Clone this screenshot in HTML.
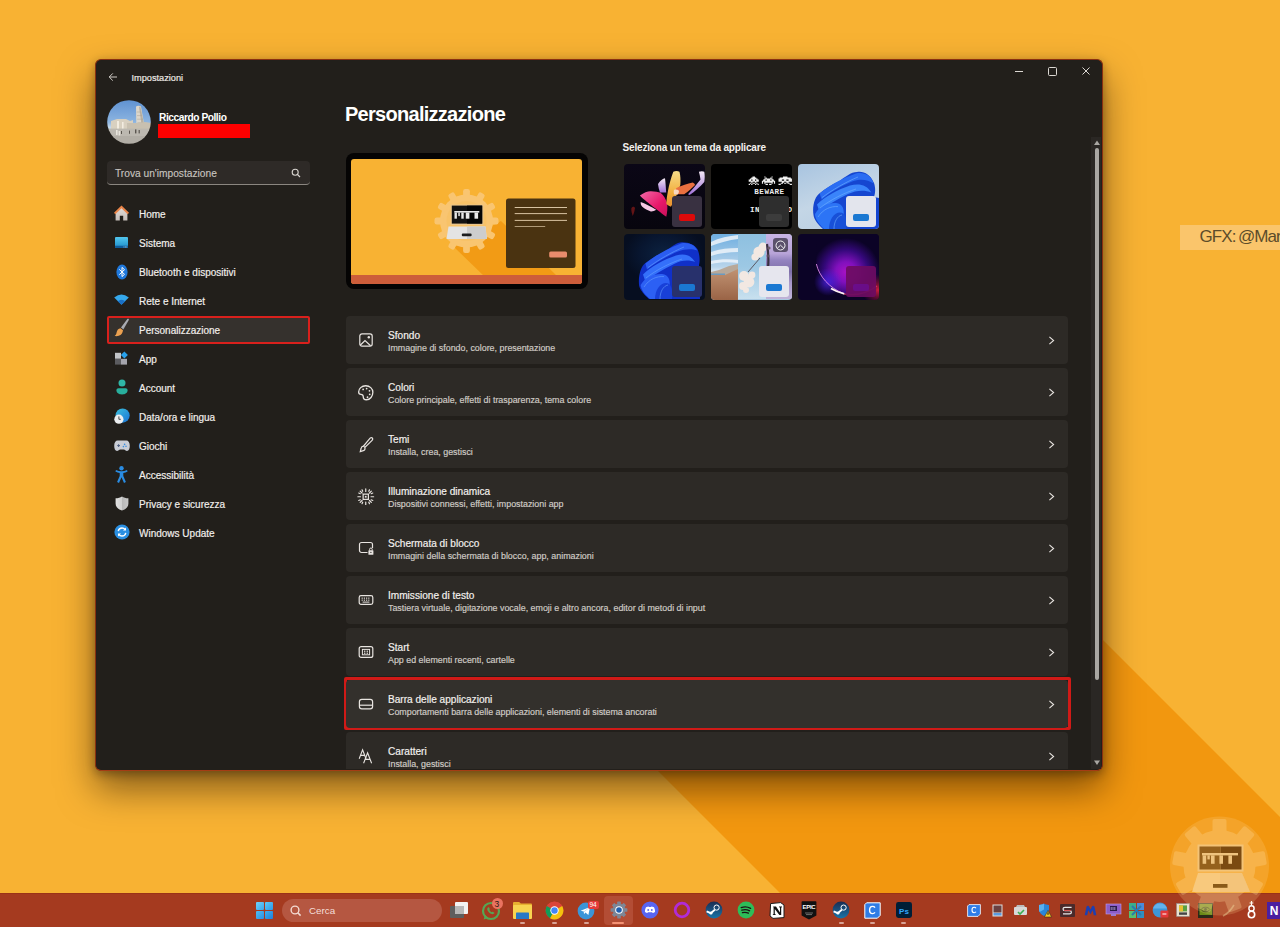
<!DOCTYPE html>
<html><head><meta charset="utf-8">
<style>
*{margin:0;padding:0;box-sizing:border-box}
html,body{width:1280px;height:927px;overflow:hidden}
body{position:relative;font-family:"Liberation Sans",sans-serif;background:#F8B233;color:#fff}
.abs{position:absolute}
#bg{position:absolute;left:0;top:0;width:1280px;height:927px;overflow:hidden}
#win{position:absolute;left:95px;top:58.5px;width:1007.5px;height:712.5px;background:#221F1B;border:1px solid #8a3010;border-bottom-color:#a43c14;border-radius:6px;box-shadow:0 18px 36px rgba(20,8,0,.5),0 3px 10px rgba(20,8,0,.32);overflow:hidden}
.t{position:absolute;white-space:nowrap;line-height:1}
.nav,.ct,.cs{-webkit-text-stroke:.18px currentColor}
.nav{position:absolute;left:139px;font-size:10px;color:#f2efec}
.card{position:absolute;left:346px;width:722px;height:48px;background:#2D2A26;border-radius:4px}
.ct{position:absolute;left:42px;top:15px;font-size:10.1px;color:#f4f1ee;white-space:nowrap;line-height:1}
.cs{position:absolute;left:42px;top:28px;font-size:8.9px;color:#cfcac5;white-space:nowrap;line-height:1}
.chev{position:absolute;left:701.5px;top:19.5px;width:8px;height:9px}
.tile{width:81px;height:65px;border-radius:4px;overflow:hidden}
.tile>svg{filter:blur(.35px)}
.mw{position:absolute;left:48px;top:31.5px;width:30px;height:31px;border-radius:3px}
.pill{position:absolute;left:55px;top:50px;width:16px;height:6.5px;border-radius:2px}
.dot{position:absolute;top:922px;width:5px;height:2px;background:#D9A396;border-radius:1px}
#taskbar{position:absolute;left:0;top:893px;width:1280px;height:34px;background:#A53A1F;border-top:1px solid #9a3218}
</style></head><body>
<div id="bg">
<svg width="1280" height="927" style="position:absolute;left:0;top:0">
<polygon points="500,613 703,240 1390,927 814,927" fill="#F2970F"/>
</svg>
</div>

<div id="win"></div>
<!-- titlebar -->
<svg class="abs" style="left:107px;top:71px" width="12" height="12" viewBox="0 0 12 12"><path d="M10 6H2.2M5.8 2.4L2.2 6l3.6 3.6" stroke="#cfcbc6" stroke-width="1" fill="none"/></svg>
<div class="t" style="left:131.5px;top:73.5px;font-size:9.2px;color:#ebe7e3;-webkit-text-stroke:.2px #ebe7e3">Impostazioni</div>
<!-- window controls -->
<div class="abs" style="left:1015px;top:70.5px;width:8px;height:1px;background:#dcd8d3"></div>
<div class="abs" style="left:1048px;top:67px;width:8.5px;height:8.5px;border:1px solid #dcd8d3;border-radius:1.5px"></div>
<svg class="abs" style="left:1081.5px;top:67px" width="8" height="8" viewBox="0 0 8 8"><path d="M.5 .5L7.5 7.5M7.5 .5L.5 7.5" stroke="#dcd8d3" stroke-width="1"/></svg>
<!-- profile -->
<svg class="abs" style="left:107px;top:100px" width="44" height="44" viewBox="0 0 44 44"><defs><clipPath id="avc"><circle cx="22" cy="22" r="21.8"/></clipPath><linearGradient id="sky" x1="0" y1="0" x2="0" y2="1"><stop offset="0" stop-color="#5f92d2"/><stop offset=".5" stop-color="#8cb4e0"/><stop offset=".62" stop-color="#c4d8ea"/></linearGradient></defs>
<filter id="avb" x="-10%" y="-10%" width="120%" height="120%"><feGaussianBlur stdDeviation=".5"/></filter><g clip-path="url(#avc)"><g filter="url(#avb)">
<rect width="44" height="44" fill="url(#sky)"/>
<path d="M29 6.4c1.6-.8 3.6-.8 5 0l3.8 21.6h-8.4z" fill="#dcd6ca"/><path d="M33.4 6.6l4.4 21.4h-2.8L32 6.8z" fill="#b8b0a2"/>
<g stroke="#a8a092" stroke-width=".5"><path d="M29.8 12h4.6M30 15.6h5.2M30.2 19.2h5.8M30.4 22.8h6.4"/></g>
<path d="M4 21l6-2h9l4 2 3-1v9H4z" fill="#d8d0c0"/>
<path d="M10 21h2v8h-2zM15 22h1.6v7H15z" fill="#f2ece0"/>
<path d="M20 23h10l8-1 6 1v6H20z" fill="#c8c0b0"/>
<rect x="0" y="28.6" width="44" height="16" fill="#bcb8b0"/>
<rect x="0" y="36" width="44" height="8" fill="#b2aea6"/>
<g fill="#5a5650"><rect x="28" y="29.4" width="1.4" height="4"/><rect x="31.6" y="30" width="1.2" height="3.4"/><rect x="14" y="31" width="1" height="3"/><rect x="22" y="30.6" width="1" height="3.2"/></g>
<g fill="#e8e4dc"><rect x="9" y="30" width="1.6" height="5"/><rect x="11.6" y="31" width="1.6" height="4.4"/></g>
</g></g></svg>
<div class="t" style="left:159px;top:113px;font-size:10.2px;font-weight:bold;color:#fff;letter-spacing:-.45px">Riccardo Pollio</div>
<div class="abs" style="left:158px;top:124px;width:92px;height:14px;background:#FE0000"></div>
<!-- search -->
<div class="abs" style="left:107px;top:161px;width:203px;height:24px;background:#2E2A27;border-radius:4px;border-bottom:1px solid #8b8680"></div>
<div class="t" style="left:115px;top:168.5px;font-size:10.2px;color:#c9c5c0;-webkit-text-stroke:.12px #c9c5c0">Trova un'impostazione</div>
<svg class="abs" style="left:291px;top:168px" width="10" height="10" viewBox="0 0 10 10"><circle cx="4.2" cy="4.2" r="3" stroke="#d8d4cf" stroke-width="1.1" fill="none"/><path d="M6.4 6.4L9 9" stroke="#d8d4cf" stroke-width="1.2"/></svg>
<!-- nav -->
<div class="abs" style="left:107px;top:316px;width:203px;height:28px;background:#35312D;border:2px solid #D9201C;border-radius:2px"></div>
<div class="t nav" style="top:210px">Home</div>
<div class="t nav" style="top:239px">Sistema</div>
<div class="t nav" style="top:268px">Bluetooth e dispositivi</div>
<div class="t nav" style="top:297px">Rete e Internet</div>
<div class="t nav" style="top:326px">Personalizzazione</div>
<div class="t nav" style="top:355px">App</div>
<div class="t nav" style="top:384px">Account</div>
<div class="t nav" style="top:413px">Data/ora e lingua</div>
<div class="t nav" style="top:442px">Giochi</div>
<div class="t nav" style="top:471px">Accessibilità</div>
<div class="t nav" style="top:500px">Privacy e sicurezza</div>
<div class="t nav" style="top:529px">Windows Update</div>
<!-- nav icons -->
<svg class="abs" style="left:113.8px;top:205.4px" width="15" height="16" viewBox="0 0 15 16"><defs><linearGradient id="hb" x1="0" y1="0" x2="0" y2="1"><stop offset="0" stop-color="#e2dcd8"/><stop offset="1" stop-color="#c4bcb8"/></linearGradient></defs><path d="M1.6 7.6V15.4h4.2v-4.6h3.4v4.6h4.2V7.6L7.5 2.4z" fill="url(#hb)"/><path d="M0 7.8L7.5 .6 15 7.8l-1.3 1.4L7.5 3.2 1.3 9.2z" fill="#ea8448"/></svg>
<svg class="abs" style="left:115px;top:236.6px" width="13" height="11.4" viewBox="0 0 13 11.4"><defs><linearGradient id="gs" x1="0" y1="0" x2="0" y2="1"><stop offset="0" stop-color="#52c6ee"/><stop offset=".7" stop-color="#2c9ed4"/><stop offset="1" stop-color="#1a78b8"/></linearGradient></defs><rect x="0" y="0" width="13" height="11.2" rx="1" fill="url(#gs)"/><rect x="0" y="8.8" width="13" height="2.4" fill="#0f5c9a"/><g fill="#cfe8f8"><rect x="8.6" y="9.6" width=".8" height=".8"/><rect x="10" y="9.6" width=".8" height=".8"/><rect x="11.4" y="9.6" width=".8" height=".8"/></g></svg>
<svg class="abs" style="left:115.5px;top:263.5px" width="12" height="16" viewBox="0 0 12 16"><ellipse cx="6" cy="8" rx="5.6" ry="7.6" fill="#1f78dc"/><path d="M3.3 5.4L8.5 10.3 6 12.6V3.4L8.5 5.7 3.3 10.6" stroke="#fff" stroke-width="1" fill="none" stroke-linejoin="round"/></svg>
<svg class="abs" style="left:114px;top:294px" width="15" height="11" viewBox="0 0 15 11"><path d="M.2 3.6Q7.5-2.4 14.8 3.6L7.5 10.8z" fill="#35a8ec"/><path d="M3.6 7.2Q7.5 4.2 11.4 7.2L7.5 10.8z" fill="#1a6fc4"/></svg>
<svg class="abs" style="left:114px;top:317.5px" width="16" height="19" viewBox="0 0 16 19"><defs><linearGradient id="brh" x1="0" y1="0" x2="1" y2="1"><stop offset="0" stop-color="#c8cad0"/><stop offset="1" stop-color="#8a8c94"/></linearGradient></defs><path d="M13.6 .8c.8-.4 1.6.3 1.2 1.1L9.4 11.4 7 9.6z" fill="url(#brh)"/><path d="M6.4 10.2l2.6 2c-.2 2.6-1.6 4.8-4.2 5.6-1.4.4-3 .4-4.2.2 1.2-.8 1.8-2 2-3.4.4-2.4 1.8-4.2 3.8-4.4z" fill="#eba050"/></svg>
<svg class="abs" style="left:115px;top:351px" width="14" height="14" viewBox="0 0 14 14"><rect x="0" y="1.8" width="6" height="6" fill="#c2c4c8"/><rect x="0" y="7.8" width="6" height="5.8" fill="#5c5c60"/><rect x="6" y="7.8" width="6" height="5.8" fill="#a4a4ac"/><path d="M9.4 .6l3.5 3.5-3.5 3.5-3.5-3.5z" fill="#28a0ea"/></svg>
<svg class="abs" style="left:115.5px;top:379px" width="12" height="16" viewBox="0 0 12 16"><circle cx="6" cy="3.9" r="3.5" fill="#2fb6a6"/><path d="M.4 11.2c0-1.2.9-2 2-2h7.2c1.1 0 2 .8 2 2 0 2.4-2.4 4.2-5.6 4.2S.4 13.6.4 11.2z" fill="#28ae9c"/></svg>
<svg class="abs" style="left:114px;top:408.4px" width="16" height="16" viewBox="0 0 16 16"><defs><linearGradient id="glb" x1="0" y1="0" x2="1" y2="1"><stop offset="0" stop-color="#3cc0dc"/><stop offset="1" stop-color="#1a72d6"/></linearGradient></defs><circle cx="8.6" cy="7.6" r="7.1" fill="url(#glb)"/><circle cx="4.9" cy="11.2" r="4.6" fill="#eceef0"/><path d="M4.9 8.4v2.9h1.9" stroke="#3a3a3a" stroke-width=".9" fill="none"/></svg>
<svg class="abs" style="left:113.5px;top:440px" width="16" height="12" viewBox="0 0 16 12"><path d="M3.6.6h8.8c2 0 3.4 2 3.4 5.2 0 3-1 5.2-2.8 5.2-1.4 0-2-1.6-3.2-1.6H6.2C5 9.4 4.4 11 3 11 1.2 11 .2 8.8.2 5.8.2 2.6 1.6.6 3.6.6z" fill="#c9cdd6"/><path d="M3.2 5.6h2.8M4.6 4.2v2.8" stroke="#4a5c80" stroke-width="1"/><circle cx="10.6" cy="4.4" r=".8" fill="#3a8ee0"/><circle cx="12" cy="6.2" r=".8" fill="#3a8ee0"/><circle cx="9.4" cy="6.6" r=".8" fill="#3a8ee0"/></svg>
<svg class="abs" style="left:115px;top:465.6px" width="13" height="17" viewBox="0 0 13 17"><circle cx="6.5" cy="2.3" r="2.2" fill="#2a8ce2"/><path d="M.4 5.6l.6-1.6c1.8.8 3.6 1.2 5.5 1.2s3.7-.4 5.5-1.2l.6 1.6c-1.4.7-2.8 1.2-4.3 1.5v2.8l2.6 6.2-1.9.8-2.5-5.6-2.5 5.6-1.9-.8 2.6-6.2V7.1C3.2 6.8 1.8 6.3.4 5.6z" fill="#2a8ce2"/></svg>
<svg class="abs" style="left:114.5px;top:495.5px" width="14" height="15" viewBox="0 0 14 15"><defs><linearGradient id="gsh" x1="0" y1="0" x2="1" y2="0"><stop offset="0" stop-color="#e2e2e2"/><stop offset=".5" stop-color="#d0d0d0"/><stop offset=".5" stop-color="#b8b8b8"/><stop offset="1" stop-color="#c8c8c8"/></linearGradient></defs><path d="M7 .4c1.8 1.2 3.8 1.8 6.4 1.8v5.2c0 3.2-2.2 5.8-6.4 7.2C2.8 13.2.6 10.6.6 7.4V2.2C3.2 2.2 5.2 1.6 7 .4z" fill="url(#gsh)"/></svg>
<svg class="abs" style="left:113.5px;top:524px" width="16" height="16" viewBox="0 0 16 16"><circle cx="8" cy="8" r="7.6" fill="#2a8fe2"/><path d="M4.2 7.2C4.6 5.2 6.2 4 8 4c1.3 0 2.4.6 3.1 1.5M11.8 8.8c-.4 2-2 3.2-3.8 3.2-1.3 0-2.4-.6-3.1-1.5" stroke="#fff" stroke-width="1.3" fill="none"/><path d="M12 3.4v3h-3z" fill="#fff"/><path d="M4 12.6v-3h3z" fill="#fff"/></svg>
<!-- heading -->
<div class="t" style="left:345px;top:104px;font-size:20px;font-weight:bold;color:#fff;letter-spacing:-.72px">Personalizzazione</div>


<!-- preview -->
<div class="abs" style="left:346px;top:153px;width:242px;height:136px;background:#050404;border-radius:8px"></div>
<div class="abs" style="left:351px;top:159px;width:231px;height:125px;border-radius:3px;overflow:hidden;background:#F8B233">
 <svg width="231" height="125" viewBox="0 0 231 125" style="position:absolute;left:0;top:0">
  <polygon points="103,88 150,62 207,118 134,118" fill="#F29B15"/>
  <g transform="translate(115.5,62)" fill="#F9C571">
   <circle r="26.5"/>
   <rect id="teeth" x="-3.4" y="-32" width="6.8" height="9" rx="2.2"/>
   <use href="#teeth" transform="rotate(30)"/><use href="#teeth" transform="rotate(60)"/><use href="#teeth" transform="rotate(90)"/><use href="#teeth" transform="rotate(120)"/><use href="#teeth" transform="rotate(150)"/><use href="#teeth" transform="rotate(180)"/><use href="#teeth" transform="rotate(210)"/><use href="#teeth" transform="rotate(240)"/><use href="#teeth" transform="rotate(270)"/><use href="#teeth" transform="rotate(300)"/><use href="#teeth" transform="rotate(330)"/>
  </g>
  <circle cx="115.5" cy="62" r="20" fill="#F8BF5E" opacity=".5"/>
  <rect x="99.5" y="45.5" width="33" height="20.5" rx="1" fill="#EAC58A"/>
  <rect x="100.8" y="46.6" width="30.4" height="18" fill="#121212"/>
  <rect x="116" y="46.6" width="15.2" height="18" fill="#050505"/>
  <g fill="#E8E8E8"><rect x="103.3" y="52" width="25" height="1.6"/><rect x="103.5" y="53.5" width="2.4" height="6.2"/><rect x="107.3" y="53.5" width="1.5" height="3.6"/><rect x="110.3" y="53.5" width="2.4" height="6.2"/><rect x="114.8" y="53.5" width="3.6" height="6.2"/><rect x="123.5" y="53.5" width="3.6" height="6.2"/></g>
  <polygon points="97.5,67.5 134.5,67.5 135.8,80 95.5,80" fill="#E4E4E4"/>
  <polygon points="116,67.5 134.5,67.5 135.8,80 116,80" fill="#CDCDCD"/>
  <rect x="110.8" y="74.6" width="9.8" height="2.6" rx="1" fill="#1e1e1e"/>
  <rect x="155" y="39.5" width="69.5" height="69.5" rx="2.5" fill="#4A3311"/>
  <g stroke="#D8C3A2" stroke-width="1"><path d="M163.7 48.5h52.3M163.7 54.6h52.3M163.7 61.4h52.3"/><path d="M163.7 67.5h30.5" stroke="#b09a78"/></g>
  <rect x="198.2" y="92.6" width="17.8" height="6" rx="1.5" fill="#E98C6C"/>
  <rect x="0" y="116" width="231" height="9" fill="#CD5D3A"/>
 </svg>
</div>
<div class="t" style="left:622.5px;top:143px;font-size:10px;font-weight:bold;color:#f4f1ee;letter-spacing:-.17px">Seleziona un tema da applicare</div>
<!-- tiles -->
<div class="abs tile" style="left:624px;top:164px;background:linear-gradient(180deg,#0b0716 0%,#07050e 100%)">
 <svg class="abs" style="left:0;top:0" width="81" height="65" viewBox="0 0 81 65">
  <defs>
   <linearGradient id="pk" x1="0" y1="0" x2="1" y2="1"><stop offset="0" stop-color="#f26aa8"/><stop offset=".6" stop-color="#e8186a"/><stop offset="1" stop-color="#c8105a"/></linearGradient>
   <linearGradient id="yl" x1="0" y1="0" x2="0" y2="1"><stop offset="0" stop-color="#f6dc88"/><stop offset=".6" stop-color="#f2b040"/><stop offset="1" stop-color="#e89030"/></linearGradient>
   <linearGradient id="wl" x1="0" y1="0" x2="0" y2="1"><stop offset="0" stop-color="#f4eaf4"/><stop offset="1" stop-color="#a070d8"/></linearGradient>
  </defs>
  <path d="M7.4 44c1.5-2 3-1.5 3.6 0-.4 3-1.4 6-2.2 8-.8-2.2-1.8-5-1.4-8z" fill="#7a1818" opacity=".8"/>
  <path d="M34 20c2-3.5 5-5.5 7-5.8.6 4 .8 9.4 1.2 14.4h-6.2C35 26 34.4 23 34 20z" fill="url(#wl)"/>
  <path d="M15.9 31.4C20 28.5 24 27 27 27.2c4 .2 7.5.6 9.5 1.6 3 2.2 5.5 6.5 6.6 10.8.6 4 .2 9-.8 13.2-3-2-6-4.5-9.3-7C28 42 23 38 21.4 36.5c-2.2-1.8-4.2-3.3-5.5-5.1z" fill="url(#pk)"/>
  <path d="M16.7 38c5 2 10.5 4.5 15.5 7.8-1.8 1.2-3.8 1.8-5.4 1.6-3-1-6.2-2.7-8.5-4.7-1.2-1.2-1.8-2.7-1.6-4.7z" fill="#f4c8e4"/>
  <path d="M49.3 7.8c2-1.2 4.4-1.2 6.2 0 1 4 1.2 8.6.8 13.1-2.2 7.6-5.6 14.6-9.3 21.8-2.4-.8-4.2-1.8-4.7-3.1.2-4.2.8-8.4 1.6-12.4 1.2-6.6 3-13 5.4-19.4z" fill="url(#yl)"/>
  <path d="M52.4 24.1c5.4-2.4 11-4.4 16.3-5.5 1.2.4 2 1.2 2.3 2.4-3.4 3.4-7 6.6-10.8 9.3h-8.6c-.4-2.2-.2-4.2.8-6.2z" fill="#ea7040"/>
  <path d="M50 26c1.8-.8 3.6-.4 5 .8 0 1.4-.4 2.6-1.2 3.6h-3.6c-.6-1.4-.6-3 -.2-4.4z" fill="#f8d8c0"/>
  <path d="M74.9 7.8c2-.8 4-.8 5.4 0 .6 3.4.6 6.8 0 10.1-4.6 5-9.3 9.4-14.7 13.1l-1.6-.7c4.4-4.8 8.6-9.8 12.5-14.8-.4-2.6-.9-5.2-1.6-7.7z" fill="url(#wl)"/>
 </svg>
 <div class="mw" style="background:#393141"></div><div class="pill" style="background:#DD0A0A"></div>
</div>
<div class="abs tile" style="left:711px;top:164px;background:#000">
 <svg class="abs" style="left:0;top:0" width="81" height="65" viewBox="0 0 81 65">
  <g fill="#f0f0f0">
   <g transform="translate(37.7 12.4) scale(1.26 1.06)"><path d="M3 0h2v1H3zM2 1h4v1H2zM1 2h6v1H1zM0 3h2v1H0zM3 3h2v1H3zM6 3h2v1H6zM0 4h8v1H0zM2 5h1v1H2zM5 5h1v1H5zM1 6h1v1H1zM3 6h2v1H3zM6 6h1v1H6zM0 7h1v1H0zM2 7h1v1H2zM5 7h1v1H5zM7 7h1v1H7z"/></g>
   <g transform="translate(50.9 12.4) scale(1.2 1.06)"><path d="M2 0h1v1H2zM8 0h1v1H8zM3 1h1v1H3zM7 1h1v1H7zM2 2h7v1H2zM1 3h2v1H1zM4 3h3v1H4zM8 3h2v1H8zM0 4h11v1H0zM0 5h1v1H0zM2 5h7v1H2zM10 5h1v1H10zM0 6h1v1H0zM2 6h1v1H2zM8 6h1v1H8zM10 6h1v1H10zM3 7h2v1H3zM6 7h2v1H6z"/></g>
   <g transform="translate(67.5 12.4) scale(1.12 1.06)"><path d="M4 0h4v1H4zM1 1h10v1H1zM0 2h12v1H0zM0 3h3v1H0zM5 3h2v1H5zM9 3h3v1H9zM0 4h12v1H0zM3 5h2v1H3zM7 5h2v1H7zM2 6h2v1H2zM5 6h2v1H5zM8 6h2v1H8zM0 7h2v1H0zM10 7h2v1H10z"/></g>
  </g>
 </svg>
 <div class="t" style="left:43.3px;top:25.2px;font-family:'Liberation Mono',monospace;font-size:7.6px;font-weight:bold;color:#ececec;letter-spacing:.5px">BEWARE</div>
 <div class="t" style="left:39px;top:43.2px;font-family:'Liberation Mono',monospace;font-size:7.6px;font-weight:bold;color:#ececec;letter-spacing:.5px">IN</div>
 <div class="t" style="left:76.5px;top:43.2px;font-family:'Liberation Mono',monospace;font-size:7.6px;font-weight:bold;color:#ececec">D</div>
 <div class="mw" style="background:#2e2e2e"></div><div class="pill" style="background:#3c3c3c"></div>
</div>
<div class="abs tile" style="left:798px;top:164px;background:linear-gradient(160deg,#a8c4e0 0%,#c4d6e6 50%,#b8cde0 100%)">
 <svg class="abs" style="left:0;top:0" width="81" height="65" viewBox="0 0 81 65">
  <path d="M15.5 51C14 42 17 32 22 29 28 24 35 20 40 18 47 13 53 8 59 8 66 7 72 10 76 19 78 25 77 30 76 33L81 34V65H25C20 60 16 56 15.5 51z" fill="#1546d0"/>
  <path d="M21.7 29.6C30 22 44 14 58 9.4 66 7.8 73 11 75.6 19.6 70 15.6 62 14.6 54 17.6 44 21.6 32 28.6 23.6 35.6z" fill="#2a6cf2"/>
  <path d="M19 40.6C26 33 40 25.6 52 21.6 61 19 69 21 73.4 28.6 67 25.6 58 26 50 30 40 35 28 41.6 21.4 47.6z" fill="#3a84fa"/>
  <path d="M17 50C21 42 30 38.6 38 39 45 39.6 47 46 45 54 43 60 40 65 37 65H26C21 60 17 55 17 50z" fill="#2c74f6"/>
  <path d="M31 65C31 56 36 48.6 42 48.6 47 48.6 49 54 48 65z" fill="#1850d8"/>
  <g stroke="#74b4ff" stroke-width=".7" fill="none" opacity=".8"><path d="M24 33.6C34 26 48 18 60 13"/><path d="M22 44C32 36 46 29 58 25"/><path d="M20 53C25 45 33 42 40 42.6"/><path d="M36 65C36 58 39 52 44 51"/></g>
 </svg>
 <div class="mw" style="background:#E3E5ED"></div><div class="pill" style="background:#1A78D2"></div>
</div>
<div class="abs tile" style="left:624px;top:234px;height:65.6px;background:radial-gradient(ellipse 40px 30px at 40px 20px,#0c2240 0%,#081630 60%,#060e20 100%)">
 <svg class="abs" style="left:0;top:0" width="81" height="65" viewBox="0 0 81 65">
  <path d="M15.1 51.6C14 42 17 32 21.4 29.1 28 24 35 20 40 18 47 13 53 8.2 57.8 8.2 65 8 71 11 73.4 15.1 76 21 76 27 75 31 L76 65H25C20 61 16 56 15.1 51.6z" fill="#1030c8"/>
  <path d="M21.4 29.6C30 22 44 14 57 9.4 65 8 71 11 73.4 16.6 68 14.6 61 14.6 54 17.6 44 21.6 32 28.6 23 35.6z" fill="#2a5cf0"/>
  <path d="M19 40.6C26 33 40 25.6 52 21.6 60 19 67 21 71 28 65 25.6 57 26 50 30 40 35 28 41.6 21.4 47.6z" fill="#3470fa"/>
  <path d="M16.6 51C21 43 30 39.6 38 40 45 40.6 47 47 45 55 43 61 40 65 37 65H26C21 61 17 56 16.6 51z" fill="#2c60f4"/>
  <path d="M31 65C31 56 36 49 42 49 47 49 49 55 48 65z" fill="#1840d8"/>
  <g stroke="#6aa4ff" stroke-width=".7" fill="none" opacity=".8"><path d="M24 33.6C34 26 48 18 60 13"/><path d="M22 44C32 36 46 29 58 25"/><path d="M20 53C25 45 33 42 40 42.6"/><path d="M36 65C36 58 39 52 44 51"/></g>
 </svg>
 <div class="mw" style="background:#28316c"></div><div class="pill" style="background:#1A78D2"></div>
</div>
<div class="abs tile" style="left:711px;top:234px;height:65.6px;background:#a8c8e0">
 <svg class="abs" style="left:0;top:0" width="27.2" height="66" viewBox="0 0 27.2 66"><defs><linearGradient id="t5s" x1="0" y1="0" x2="0" y2="1"><stop offset="0" stop-color="#6eaee0"/><stop offset=".5" stop-color="#b8d4ea"/><stop offset=".6" stop-color="#e8f0f6"/></linearGradient><linearGradient id="t5g" x1="0" y1="0" x2="0" y2="1"><stop offset="0" stop-color="#c09272"/><stop offset="1" stop-color="#9a6446"/></linearGradient></defs>
<rect width="27.2" height="66" fill="url(#t5s)"/>
<g fill="#eef4fa" opacity=".85"><path d="M0 8c8-4 18-6 27-7v4C18 6 8 9 0 12z"/><path d="M0 18c9-3 18-4 27-4v4c-9 0-18 1-27 4z"/><path d="M0 27c9-2 18-2 27-1v3c-9-1-18-1-27 1z"/></g>
<path d="M0 38l8-2 10-4 9-2V42H0z" fill="#b8a898"/>
<rect x="0" y="39.5" width="14" height="1.6" fill="#6a9ac0"/>
<path d="M0 41l14 0 13-6V66H0z" fill="url(#t5g)"/>
</svg>
 <div class="abs" style="left:27.2px;top:0;width:28px;height:65px;background:linear-gradient(180deg,#8ec0e0 0%,#9cc8e4 50%,#c8e0ee 100%)"></div>
 <svg class="abs" style="left:27.2px;top:0" width="28" height="65" viewBox="0 0 28 65"><path d="M10 38L22 24" stroke="#4a3a40" stroke-width=".8"/><g fill="#f2e8e2"><circle cx="21" cy="18" r="5.6"/><circle cx="25" cy="13" r="4.4"/><circle cx="17" cy="23" r="3.6"/><circle cx="6" cy="42" r="5"/><circle cx="11" cy="48" r="5.4"/><circle cx="5" cy="52" r="4"/><circle cx="14" cy="41" r="3.4"/><circle cx="8" cy="56" r="3"/></g></svg>
 <div class="abs" style="left:55.2px;top:0;width:25.8px;height:65px;background:linear-gradient(180deg,#c8b4e4 0%,#b8a4d8 30%,#9484c0 40%,#7e70a8 58%,#a898c8 75%,#c0b4d8 100%)"></div>
 <svg class="abs" style="left:55.2px;top:0" width="26" height="65" viewBox="0 0 26 65"><path d="M1 10c1 6 2 14 1 24" stroke="#3a3040" stroke-width="2.2" fill="none"/><circle cx="3" cy="14" r="1.6" fill="#6a5a6a"/><circle cx="2" cy="22" r="1.4" fill="#5a4a5a"/></svg>
 <div class="abs" style="left:61.7px;top:4.3px;width:15px;height:14px;background:#5b516c;border-radius:3px"></div>
 <svg class="abs" style="left:63.7px;top:5.8px" width="11" height="11" viewBox="0 0 11 11"><circle cx="5.5" cy="5.5" r="4.5" stroke="#f4f4f4" stroke-width="1" fill="none"/><path d="M2 8.6L5.5 5.2 9 8.6" stroke="#f4f4f4" stroke-width="1" fill="none"/></svg>
 <div class="mw" style="background:#E6E6EE"></div><div class="pill" style="background:#1A78D2"></div>
</div>
<div class="abs tile" style="left:798px;top:234px;height:65.6px;background:#0b0326">
 <svg class="abs" style="left:0;top:0" width="81" height="66" viewBox="0 0 81 66">
  <defs>
   <radialGradient id="pl6" cx="48" cy="38" r="34" gradientUnits="userSpaceOnUse"><stop offset="0" stop-color="#a812c4"/><stop offset=".3" stop-color="#8010bc"/><stop offset=".65" stop-color="#34087a"/><stop offset="1" stop-color="#0b0326"/></radialGradient>
   <radialGradient id="bl6" cx="30" cy="48" r="14" gradientUnits="userSpaceOnUse"><stop offset="0" stop-color="#4a20e0" stop-opacity=".9"/><stop offset="1" stop-color="#4a20e0" stop-opacity="0"/></radialGradient>
   <radialGradient id="rd6" cx="80" cy="56" r="16" gradientUnits="userSpaceOnUse"><stop offset="0" stop-color="#e02040" stop-opacity=".9"/><stop offset="1" stop-color="#a01040" stop-opacity="0"/></radialGradient>
  </defs>
  <path d="M18.4 30C21 42 31 54 46 59.6 60 62 81 60 81 40V0H18z" fill="url(#pl6)"/>
  <circle cx="30" cy="48" r="14" fill="url(#bl6)"/>
  <rect x="60" y="36" width="21" height="30" fill="url(#rd6)"/>
  <path d="M18.4 30C21 42 31 54 46 59.6" stroke="#e890f0" stroke-width="1" fill="none" opacity=".85"/>
  <path d="M33 54.6C37 57 41.5 58.8 46.4 59.8" stroke="#fff2f6" stroke-width="1.8" fill="none"/>
  <path d="M46 60c10 2 22 0 33-8" stroke="#ff4070" stroke-width="1.4" fill="none" opacity=".6"/>
 </svg>
 <div class="mw" style="background:#6c0c62;opacity:.92"></div><div class="pill" style="background:#6a10a8;opacity:.55"></div>
</div>
<!-- cards -->
<div class="card" style="top:316px;background:#2D2A26"><svg class="abs" style="left:12px;top:16px" width="16" height="16" viewBox="0 0 16 16"><rect x="1.8" y="1.8" width="12.4" height="12.4" rx="2.2" stroke="#e8e4e0" stroke-width="1.2" fill="none"/><path d="M2.2 13.2L7 8.6l5.6 5.2" stroke="#e8e4e0" stroke-width="1.2" fill="none"/><circle cx="10.8" cy="5.2" r="1.2" fill="#e8e4e0"/></svg><div class="ct">Sfondo</div><div class="cs">Immagine di sfondo, colore, presentazione</div><svg class="chev" viewBox="0 0 8 9"><path d="M1.4 .8l4.2 3.7-4.2 3.7" stroke="#e8e4e0" stroke-width="1.1" fill="none"/></svg></div>
<div class="card" style="top:368px;background:#2D2A26"><svg class="abs" style="left:11.3px;top:15.6px" width="17.5" height="17.5" viewBox="0 0 16 16"><path d="M8 1.6C4.2 1.6 1.5 4.3 1.5 7.2c0 1.5 1 2.2 2.1 2.2 1.4 0 2.1.9 2.1 2 0 1.6 1 3 2.8 3 3.6 0 6-3.3 6-6.8C14.5 4.2 11.6 1.6 8 1.6z" stroke="#e8e4e0" stroke-width="1.2" fill="none"/><circle cx="5.6" cy="5" r=".8" fill="#e8e4e0"/><circle cx="8.8" cy="4.2" r=".8" fill="#e8e4e0"/><circle cx="11.4" cy="6.2" r=".8" fill="#e8e4e0"/><circle cx="11.6" cy="9.4" r=".8" fill="#e8e4e0"/><circle cx="9.6" cy="12" r=".8" fill="#e8e4e0"/></svg><div class="ct">Colori</div><div class="cs">Colore principale, effetti di trasparenza, tema colore</div><svg class="chev" viewBox="0 0 8 9"><path d="M1.4 .8l4.2 3.7-4.2 3.7" stroke="#e8e4e0" stroke-width="1.1" fill="none"/></svg></div>
<div class="card" style="top:420px;background:#2D2A26"><svg class="abs" style="left:11.3px;top:15.6px" width="17.5" height="17.5" viewBox="0 0 16 16"><path d="M14 1.8c-.6-.6-1.4-.4-2 .2L6 9.2l1.2 1.2 6.6-6.4c.6-.6.8-1.6.2-2.2z" stroke="#e8e4e0" stroke-width="1.1" fill="none"/><path d="M6 9.2c-1.2 0-2 .8-2.2 2L3 14.2l2.8-.8c1.2-.3 1.8-1.4 1.4-2.6" stroke="#e8e4e0" stroke-width="1.1" fill="none"/></svg><div class="ct">Temi</div><div class="cs">Installa, crea, gestisci</div><svg class="chev" viewBox="0 0 8 9"><path d="M1.4 .8l4.2 3.7-4.2 3.7" stroke="#e8e4e0" stroke-width="1.1" fill="none"/></svg></div>
<div class="card" style="top:472px;background:#2D2A26"><svg class="abs" style="left:11.3px;top:15.6px" width="17.5" height="17.5" viewBox="0 0 16 16"><rect x="5.6" y="5.6" width="4.8" height="4.8" stroke="#e8e4e0" stroke-width="1.1" fill="none"/><rect x="7.2" y="7.2" width="1.6" height="1.6" fill="#e8e4e0"/><g stroke="#e8e4e0" stroke-width="1.1" stroke-linecap="round"><path d="M8 .8v2.4M8 12.8v2.4M.8 8h2.4M12.8 8h2.4M2.9 2.9l1.7 1.7M11.4 11.4l1.7 1.7M13.1 2.9l-1.7 1.7M4.6 11.4l-1.7 1.7M4.6 1.6l.6 1.4M10.8 13l.6 1.4M1.6 11.4l1.4-.6M13 5.2l1.4-.6M11.4 1.6l-.6 1.4M5.2 13l-.6 1.4M1.6 4.6l1.4.6M13 10.8l1.4.6"/></g></svg><div class="ct">Illuminazione dinamica</div><div class="cs">Dispositivi connessi, effetti, impostazioni app</div><svg class="chev" viewBox="0 0 8 9"><path d="M1.4 .8l4.2 3.7-4.2 3.7" stroke="#e8e4e0" stroke-width="1.1" fill="none"/></svg></div>
<div class="card" style="top:524px;background:#2D2A26"><svg class="abs" style="left:12px;top:16px" width="16" height="16" viewBox="0 0 16 16"><path d="M9.5 12.5H3.5c-1.1 0-2-.9-2-2v-6c0-1.1.9-2 2-2h9c1.1 0 2 .9 2 2v3.5" stroke="#e8e4e0" stroke-width="1.2" fill="none"/><rect x="10.4" y="10.2" width="5" height="4.6" rx=".6" fill="#e8e4e0"/><path d="M11.6 10.4V9.3a1.3 1.3 0 0 1 2.6 0v1.1" stroke="#e8e4e0" stroke-width="1" fill="none"/><circle cx="12.9" cy="12.4" r=".6" fill="#2D2A26"/></svg><div class="ct">Schermata di blocco</div><div class="cs">Immagini della schermata di blocco, app, animazioni</div><svg class="chev" viewBox="0 0 8 9"><path d="M1.4 .8l4.2 3.7-4.2 3.7" stroke="#e8e4e0" stroke-width="1.1" fill="none"/></svg></div>
<div class="card" style="top:576px;background:#2D2A26"><svg class="abs" style="left:12px;top:16px" width="16" height="16" viewBox="0 0 16 16"><rect x="1.2" y="3.6" width="13.6" height="8.8" rx="1.8" stroke="#e8e4e0" stroke-width="1.2" fill="none"/><g fill="#e8e4e0"><rect x="3.6" y="5.6" width="1.2" height="1.1"/><rect x="5.8" y="5.6" width="1.2" height="1.1"/><rect x="8" y="5.6" width="1.2" height="1.1"/><rect x="10.2" y="5.6" width="1.2" height="1.1"/><rect x="3.6" y="7.6" width="1.2" height="1.1"/><rect x="5.8" y="7.6" width="1.2" height="1.1"/><rect x="8" y="7.6" width="1.2" height="1.1"/><rect x="10.2" y="7.6" width="1.2" height="1.1"/><rect x="4.6" y="9.6" width="6.8" height="1"/></g></svg><div class="ct">Immissione di testo</div><div class="cs">Tastiera virtuale, digitazione vocale, emoji e altro ancora, editor di metodi di input</div><svg class="chev" viewBox="0 0 8 9"><path d="M1.4 .8l4.2 3.7-4.2 3.7" stroke="#e8e4e0" stroke-width="1.1" fill="none"/></svg></div>
<div class="card" style="top:628px;background:#2D2A26"><svg class="abs" style="left:12px;top:16px" width="16" height="16" viewBox="0 0 16 16"><rect x="1.2" y="2.6" width="13.6" height="10.8" rx="2" stroke="#e8e4e0" stroke-width="1.2" fill="none"/><rect x="4.4" y="5.4" width="7.2" height="5.4" stroke="#e8e4e0" stroke-width="1" fill="none"/><g fill="#e8e4e0"><rect x="6" y="6.6" width="1.4" height="1.2"/><rect x="8.6" y="6.6" width="1.4" height="1.2"/><rect x="6" y="8.6" width="1.4" height="1.2"/><rect x="8.6" y="8.6" width="1.4" height="1.2"/></g></svg><div class="ct">Start</div><div class="cs">App ed elementi recenti, cartelle</div><svg class="chev" viewBox="0 0 8 9"><path d="M1.4 .8l4.2 3.7-4.2 3.7" stroke="#e8e4e0" stroke-width="1.1" fill="none"/></svg></div>
<div class="abs" style="left:344px;top:677px;width:727px;height:53px;border:3px solid #D01A17;border-radius:2px"></div>
<div class="card" style="top:680px;background:#33302C"><svg class="abs" style="left:12px;top:16px" width="16" height="16" viewBox="0 0 16 16"><rect x="1.4" y="3.4" width="13.2" height="9.4" rx="2.4" stroke="#e8e4e0" stroke-width="1.2" fill="none"/><path d="M1.6 9.2h12.8" stroke="#e8e4e0" stroke-width="1.2"/></svg><div class="ct">Barra delle applicazioni</div><div class="cs">Comportamenti barra delle applicazioni, elementi di sistema ancorati</div><svg class="chev" viewBox="0 0 8 9"><path d="M1.4 .8l4.2 3.7-4.2 3.7" stroke="#e8e4e0" stroke-width="1.1" fill="none"/></svg></div>
<div class="card" style="top:732px;background:#2D2A26;height:37px;border-radius:4px 4px 0 0;overflow:hidden"><svg class="abs" style="left:12px;top:16px" width="16" height="16" viewBox="0 0 16 16"><path d="M1.2 10.8L4.6 1.8l3.4 9M2.6 7.4h4" stroke="#e8e4e0" stroke-width="1.1" fill="none"/><path d="M5.6 15.2L9.6 4.8l4 10.4M7.2 11.4h4.8" stroke="#e8e4e0" stroke-width="1.1" fill="none"/></svg><div class="ct">Caratteri</div><div class="cs">Installa, gestisci</div><svg class="chev" viewBox="0 0 8 9"><path d="M1.4 .8l4.2 3.7-4.2 3.7" stroke="#e8e4e0" stroke-width="1.1" fill="none"/></svg></div>
<!-- scrollbar -->
<div class="abs" style="left:1091px;top:137px;width:10px;height:632px;background:#2A2724"></div>
<svg class="abs" style="left:1093px;top:139px" width="8" height="7" viewBox="0 0 8 7"><path d="M1 6L4 1.5 7 6z" fill="#a9a7a3"/></svg>
<div class="abs" style="left:1094.5px;top:147.5px;width:4.5px;height:532px;background:#A9A7A3;border-radius:2.5px"></div>
<svg class="abs" style="left:1093px;top:759px" width="8" height="7" viewBox="0 0 8 7"><path d="M1 1.5L4 6 7 1.5z" fill="#a9a7a3"/></svg>
<!-- taskbar -->
<div id="taskbar"></div>
<div class="abs" style="left:256px;top:902px;width:17.5px;height:17.5px">
 <div class="abs" style="left:0;top:0;width:8.4px;height:8.4px;background:linear-gradient(135deg,#6fd2fa,#3aa6ec);border-radius:1px"></div>
 <div class="abs" style="left:9.1px;top:0;width:8.4px;height:8.4px;background:linear-gradient(135deg,#5ccaf8,#2e98e6);border-radius:1px"></div>
 <div class="abs" style="left:0;top:9.1px;width:8.4px;height:8.4px;background:linear-gradient(135deg,#4ebdf4,#2a90e2);border-radius:1px"></div>
 <div class="abs" style="left:9.1px;top:9.1px;width:8.4px;height:8.4px;background:linear-gradient(135deg,#3cb0ee,#1f7fd8);border-radius:1px"></div>
</div>
<div class="abs" style="left:282px;top:899px;width:160px;height:23px;background:#B55741;border-radius:12px"></div>
<svg class="abs" style="left:290px;top:905px" width="12" height="12" viewBox="0 0 12 12"><circle cx="5" cy="5" r="3.9" stroke="#f3dcd4" stroke-width="1.4" fill="none"/><path d="M7.8 7.8L10.6 10.6" stroke="#f3dcd4" stroke-width="1.5"/></svg>
<div class="t" style="left:309px;top:905.5px;font-size:9.8px;color:#f4dfd8">Cerca</div>
<!-- taskview -->
<div class="abs" style="left:450px;top:906px;width:13.5px;height:11.5px;background:#5e5e5e;border-radius:1px"></div>
<div class="abs" style="left:454.5px;top:902px;width:13.5px;height:12px;background:#f2f2f2;border-radius:1px"></div>
<div class="abs" style="left:454.5px;top:906px;width:9px;height:8px;background:#b8b8b8"></div>
<!-- whatsapp -->
<svg class="abs" style="left:481px;top:901px" width="21" height="20" viewBox="0 0 21 20"><circle cx="10" cy="10" r="8" stroke="#55a654" stroke-width="2.2" fill="none"/><path d="M2.6 18.6l1.6-4.6 3 3z" fill="#55a654"/><path d="M7 6.6c.4-.6 1-.6 1.2 0l.6 1.4c.1.4-.3.8-.5 1 .5 1 1.3 1.8 2.3 2.3.2-.2.6-.6 1-.5l1.4.6c.6.2.6.8 0 1.2-.8.8-2 .8-3 .2-1.4-.8-2.6-2-3.4-3.4-.6-1-.6-2 .4-2.8z" fill="#55a654"/></svg>
<div class="abs" style="left:491.5px;top:898px;width:11px;height:11px;border-radius:50%;background:#EA7360"></div>
<div class="t" style="left:494.5px;top:899.5px;font-size:8.5px;color:#2a1a14">3</div>
<!-- files -->
<svg class="abs" style="left:513px;top:902px" width="19" height="17" viewBox="0 0 19 17"><path d="M0 1.2C0 .5.5 0 1.2 0h5l1.6 1.6h10c.7 0 1.2.5 1.2 1.2V4H0z" fill="#e8b030"/><rect x="0" y="3" width="19" height="14" rx="1" fill="#f8d350"/><path d="M4 10.5h11c.6 0 1 .4 1 1V17H3v-5.5c0-.6.4-1 1-1z" fill="#2a78c6"/></svg>
<div class="dot" style="left:520px"></div>
<!-- chrome -->
<svg class="abs" style="left:545px;top:901px" width="19" height="19" viewBox="0 0 20 20"><circle cx="10" cy="10" r="9.4" fill="#DB4437"/><path d="M10 10L1.9 5.3A9.4 9.4 0 0 0 5.3 18.1z" fill="#0F9D58"/><path d="M10 10l-4.7 8.1A9.4 9.4 0 0 0 19.4 10 9.4 9.4 0 0 0 18.1 5.3z" fill="#F4C20D"/><path d="M10 10L18.1 5.3" stroke="#F4C20D" stroke-width="0"/><path d="M10 5.3h8.1A9.4 9.4 0 0 0 1.9 5.3z" fill="#DB4437"/><circle cx="10" cy="10" r="4.4" fill="#fff"/><circle cx="10" cy="10" r="3.4" fill="#4285F4"/></svg>
<div class="dot" style="left:552px"></div>
<!-- telegram -->
<svg class="abs" style="left:577px;top:902px" width="18" height="18" viewBox="0 0 18 18"><circle cx="9" cy="9" r="8.4" fill="#3B95D8"/><path d="M3.6 8.8l9.4-3.8-1.6 8-3-2.4-1.4 1.6-.2-2.6z" fill="#fff"/><path d="M6.8 10l4.8-4" stroke="#b8d8f0" stroke-width=".8"/></svg>
<div class="abs" style="left:588px;top:901px;width:11px;height:8px;background:#E53A3A;border-radius:2px"></div>
<div class="t" style="left:589.5px;top:902px;font-size:6.5px;color:#fff">94</div>
<div class="dot" style="left:584px"></div>
<!-- settings active -->
<div class="abs" style="left:604px;top:896px;width:29px;height:29px;background:#B34D35;border-radius:4px"></div>
<svg class="abs" style="left:609.5px;top:901px" width="18" height="18" viewBox="0 0 18 18"><g fill="#7D8797"><circle cx="9" cy="9" r="6.4"/><rect x="7.2" y=".6" width="3.6" height="3.6" rx=".6"/><rect x="7.2" y="13.8" width="3.6" height="3.6" rx=".6"/><rect x=".6" y="7.2" width="3.6" height="3.6" rx=".6"/><rect x="13.8" y="7.2" width="3.6" height="3.6" rx=".6"/><rect x="7.2" y=".6" width="3.6" height="3.6" rx=".6" transform="rotate(45 9 9)"/><rect x="7.2" y="13.8" width="3.6" height="3.6" rx=".6" transform="rotate(45 9 9)"/><rect x=".6" y="7.2" width="3.6" height="3.6" rx=".6" transform="rotate(45 9 9)"/><rect x="13.8" y="7.2" width="3.6" height="3.6" rx=".6" transform="rotate(45 9 9)"/></g><circle cx="9" cy="9" r="3.8" fill="#fff"/><circle cx="9" cy="9" r="2.8" fill="#1F5FAF"/></svg>
<div class="abs" style="left:612px;top:922px;width:12px;height:2px;background:#F49274;border-radius:1px"></div>
<!-- discord -->
<svg class="abs" style="left:641px;top:901px" width="18" height="18" viewBox="0 0 18 18"><circle cx="9" cy="9" r="8.6" fill="#5865F2"/><path d="M5 6.2c1-.6 2-.8 2.6-.8l.3.5h2.2l.3-.5c.6 0 1.6.2 2.6.8.8 1.6 1.2 3.2 1 4.8-.8.6-1.8 1-2.4 1l-.6-.8c.4-.1.8-.3 1.1-.5-1.8.8-4.4.8-6.2 0 .3.2.7.4 1.1.5l-.6.8c-.6 0-1.6-.4-2.4-1-.2-1.6.2-3.2 1-4.8z" fill="#fff"/><circle cx="7.2" cy="9" r=".9" fill="#5865F2"/><circle cx="10.8" cy="9" r=".9" fill="#5865F2"/></svg>
<!-- cortana ring -->
<svg class="abs" style="left:673px;top:901px" width="18" height="18" viewBox="0 0 18 18"><circle cx="9" cy="9" r="6.8" stroke="#B12BD6" stroke-width="2.8" fill="none"/></svg>
<!-- steam -->
<svg class="abs" style="left:705px;top:901px" width="18" height="18" viewBox="0 0 18 18"><defs><linearGradient id="stm" x1="0" y1="0" x2="0" y2="1"><stop offset="0" stop-color="#1a2d52"/><stop offset="1" stop-color="#1874a8"/></linearGradient></defs><circle cx="9" cy="9" r="8.4" fill="url(#stm)"/><circle cx="11.6" cy="6.6" r="2.6" stroke="#fff" stroke-width="1" fill="none"/><path d="M1.6 10.4l4.2 1.8 4-3.4" stroke="#fff" stroke-width="1.8" fill="none"/><circle cx="6" cy="12" r="1.6" fill="#fff"/></svg>
<!-- spotify -->
<svg class="abs" style="left:737px;top:901px" width="18" height="18" viewBox="0 0 18 18"><circle cx="9" cy="9" r="8.4" fill="#2EBD59"/><path d="M4.2 6.6c3-1 6.6-.8 9.4.8M4.8 9.2c2.6-.8 5.4-.6 7.8.6M5.4 11.6c2-.5 4.2-.4 6 .5" stroke="#191414" stroke-width="1.3" stroke-linecap="round" fill="none"/></svg>
<!-- notion -->
<svg class="abs" style="left:769px;top:902px" width="16" height="17" viewBox="0 0 16 17"><path d="M1.6 1.6L11.6.6 15 3v12.6l-11 .8L1 14z" fill="#fff" stroke="#1a1a1a" stroke-width="1"/><path d="M4.6 4.6h2.4l4 6V5.6l-1-.4V4.6h3v.6l-.8.3V13h-1.8L5.8 7v5l1 .4v.6h-3v-.6l.8-.4V5.2l-.8-.2z" fill="#111"/></svg>
<!-- epic -->
<svg class="abs" style="left:801px;top:901px" width="16" height="19" viewBox="0 0 16 19"><path d="M.6 1C.6.6.9.3 1.3.3h13.4c.4 0 .7.3.7.7v13.6L8 18.4.6 14.6z" fill="#111"/><text x="8" y="8.4" font-family="Liberation Sans" font-weight="bold" font-size="6" fill="#fff" text-anchor="middle" letter-spacing="-.3">EPIC</text><path d="M4 12h8M5 13.6h6" stroke="#aaa" stroke-width=".6"/></svg>
<!-- steam 2 -->
<svg class="abs" style="left:832px;top:901px" width="18" height="18" viewBox="0 0 18 18"><circle cx="9" cy="9" r="8.4" fill="url(#stm)"/><circle cx="11.6" cy="6.6" r="2.6" stroke="#fff" stroke-width="1" fill="none"/><path d="M1.6 10.4l4.2 1.8 4-3.4" stroke="#fff" stroke-width="1.8" fill="none"/><circle cx="6" cy="12" r="1.6" fill="#fff"/></svg>
<div class="dot" style="left:839px"></div>
<!-- cyberlink -->
<svg class="abs" style="left:864px;top:902px" width="17" height="17" viewBox="0 0 17 17"><path d="M2.6.8h13.6v12.6l-2.8 2.8H.8V2.6z" fill="#2F7CE6" stroke="#fff" stroke-width="1"/><path d="M11 5.6c-.6-.8-1.4-1.2-2.4-1.2-1.8 0-3 1.4-3 3.6s1.2 3.6 3 3.6c1 0 1.8-.4 2.4-1.2" stroke="#fff" stroke-width="1.4" fill="none"/></svg>
<div class="dot" style="left:870px"></div>
<!-- ps -->
<svg class="abs" style="left:896px;top:902px" width="16" height="16" viewBox="0 0 16 16"><rect x="0" y="0" width="16" height="16" rx="2.4" fill="#001E36"/><text x="8" y="11.6" font-family="Liberation Sans" font-weight="bold" font-size="8" fill="#31A8FF" text-anchor="middle">Ps</text></svg>
<div class="dot" style="left:901px"></div>
<!-- tray -->
<svg class="abs" style="left:967px;top:904px" width="14" height="13" viewBox="0 0 14 13"><path d="M2 .6h11.4v9.4l-2.4 2.4H.6V2z" fill="#2F7CE6" stroke="#fff" stroke-width=".8"/><path d="M9 4.2c-.4-.6-1-.9-1.8-.9-1.3 0-2.2 1-2.2 2.7s.9 2.7 2.2 2.7c.8 0 1.4-.3 1.8-.9" stroke="#fff" stroke-width="1.1" fill="none"/></svg>
<svg class="abs" style="left:992px;top:904px" width="11" height="13" viewBox="0 0 11 13"><rect x=".5" y=".5" width="10" height="12" fill="#ddd"/><rect x="1.5" y="1.5" width="8" height="7" fill="#6a4040"/><rect x="1.5" y="9" width="8" height="2.5" fill="#5a9ae0"/></svg>
<svg class="abs" style="left:1013px;top:904px" width="15" height="12" viewBox="0 0 15 12"><rect x="1" y="3" width="13" height="8" rx="1" fill="#d8d8d8"/><path d="M3 3l1-2h7l1 2" fill="#bbb"/><path d="M5 8l2 2 4-4" stroke="#3ab050" stroke-width="1.6" fill="none"/></svg>
<svg class="abs" style="left:1038px;top:903px" width="14" height="15" viewBox="0 0 14 15"><path d="M6 .5c1.6 1 3.2 1.4 5 1.4v4.6c0 3-2 5.2-5 6.4C3 11.7 1 9.5 1 6.5V1.9C2.8 1.9 4.4 1.5 6 .5z" fill="#2a86d8"/><path d="M6 .5c-1.6 1-3.2 1.4-5 1.4v4.6c0 1 .2 1.8.6 2.6L6 6.5z" fill="#5ab0f0"/><path d="M10 7.4l3.6 6.6H6.4z" fill="#F8C820" stroke="#222" stroke-width=".5"/><path d="M10 9.4v2.4" stroke="#111" stroke-width="1"/></svg>
<svg class="abs" style="left:1060px;top:904px" width="15" height="13" viewBox="0 0 15 13"><rect x="0" y="0" width="15" height="13" rx="1" fill="#4a2a2a"/><path d="M11.6 3.4H5c-1.2 0-2 .8-2 1.6s.8 1.6 2 1.6h4.4c1.2 0 2 .8 2 1.6s-.8 1.6-2 1.6H3" stroke="#e8e8e8" stroke-width="1.2" fill="none"/><path d="M4 6.5h7" stroke="#d83030" stroke-width=".8"/></svg>
<svg class="abs" style="left:1084px;top:905px" width="13" height="11" viewBox="0 0 15 13"><path d="M.6 12L2.8 2.2C3.4.6 5.2.6 6 2l1.5 3.2L9 2c.8-1.4 2.6-1.4 3.2.2L14.4 12h-3L10 6.2 7.5 11 5 6.2 3.6 12z" fill="#1d3fb0"/></svg>
<svg class="abs" style="left:1105px;top:903px" width="17" height="14" viewBox="0 0 17 14"><rect x="1" y="1" width="15" height="10" fill="#8C5CC8" stroke="#c0a0e8" stroke-width=".6"/><rect x="5" y="3" width="7" height="5" fill="#2a1a4a"/><path d="M6.2 4v3M8 4v3M9.8 4v3" stroke="#d0c0f0" stroke-width=".7"/><path d="M6 11h5v2H6z" fill="#9a7ad0"/></svg>
<svg class="abs" style="left:1129px;top:903px" width="15" height="15" viewBox="0 0 15 15"><rect x="0" y="0" width="7" height="7" fill="#3AAE8C"/><rect x="8" y="0" width="7" height="7" fill="#4A8AD8"/><rect x="0" y="8" width="7" height="7" fill="#5AC070"/><rect x="8" y="8" width="7" height="7" fill="#2E90C0"/><path d="M3 3l9 9M12 3l-9 9" stroke="#2a7ab0" stroke-width="2"/></svg>
<svg class="abs" style="left:1152px;top:902px" width="17" height="16" viewBox="0 0 17 16"><circle cx="8" cy="8" r="7.4" fill="#3D96D8"/><path d="M1 6.4A7.4 7.4 0 0 1 15 6.4z" fill="#62B2EC"/><rect x="8.4" y="8.6" width="8" height="7" rx="1" fill="#E43838"/><path d="M10.4 12h4" stroke="#fff" stroke-width="1"/></svg>
<svg class="abs" style="left:1176px;top:903px" width="14" height="14" viewBox="0 0 14 14"><rect x=".5" y=".5" width="13" height="13" fill="#E8E0D0" stroke="#888" stroke-width=".5"/><rect x="3" y="2.4" width="8" height="6" fill="#5aa040"/><rect x="3" y="2.4" width="4" height="6" fill="#e8c030"/><rect x="3" y="9.4" width="8" height="2.4" fill="#444"/></svg>
<svg class="abs" style="left:1198px;top:903px" width="15" height="15" viewBox="0 0 15 15"><rect x="0" y="0" width="15" height="15" fill="#2a2a18"/><rect x="1.5" y="1" width="12.5" height="11" fill="#6a8a18"/><path d="M3 6.5c2-3 7-3 9 0-2 3-7 3-9 0z" stroke="#2a3a10" stroke-width="1" fill="none"/><circle cx="7.5" cy="6.5" r="1.4" fill="#2a3a10"/></svg>
<svg class="abs" style="left:1221px;top:903px" width="15" height="15" viewBox="0 0 15 15"><path d="M2 13c4-2 8-6 11-11" stroke="#d0a070" stroke-width="1.6" fill="none" opacity=".7"/></svg>
<svg class="abs" style="left:1246px;top:900px" width="11" height="20" viewBox="0 0 11 20"><circle cx="5.5" cy="14.5" r="3.2" stroke="#fff" stroke-width="1.6" fill="none"/><circle cx="5.5" cy="8.4" r="2.6" stroke="#fff" stroke-width="1.4" fill="none"/><path d="M5.5 1v4M3.6 3h3.8" stroke="#fff" stroke-width="1.2"/></svg>
<svg class="abs" style="left:1267px;top:902px" width="13" height="17" viewBox="0 0 13 17"><rect x="0" y="0" width="16" height="17" fill="#4B1FA0"/><text x="7" y="13.4" font-family="Liberation Sans" font-weight="bold" font-size="12" fill="#fff" text-anchor="middle">N</text></svg>
<!-- GFX watermark -->
<div class="abs" style="left:1180px;top:225px;width:100px;height:25px;background:#FAC56B"></div>
<div class="t" style="left:1199.5px;top:228px;font-size:17px;color:#5c4c2a;letter-spacing:-.9px;word-spacing:-1.5px">GFX: @Mar</div>
<!-- MTT logo -->
<svg class="abs" style="left:1165px;top:811px" width="110" height="110" viewBox="0 0 110 110">
 <circle cx="54.5" cy="55" r="49.5" fill="#FFD890" opacity=".2"/>
 <g transform="translate(54.5 55)" fill="#FFDFA0" opacity=".28">
  <circle r="36"/>
  <rect id="mtooth" x="-7" y="-47" width="14" height="15" rx="2"/>
  <use href="#mtooth" transform="rotate(40)"/><use href="#mtooth" transform="rotate(80)"/><use href="#mtooth" transform="rotate(120)"/><use href="#mtooth" transform="rotate(160)"/><use href="#mtooth" transform="rotate(200)"/><use href="#mtooth" transform="rotate(240)"/><use href="#mtooth" transform="rotate(280)"/><use href="#mtooth" transform="rotate(320)"/>
 </g>
 <rect x="32.5" y="33.5" width="46" height="27" fill="#F2C47C" opacity=".9"/>
 <rect x="34.5" y="35.5" width="21" height="23" fill="#95611C"/>
 <rect x="55.5" y="35.5" width="21" height="23" fill="#7B4A10"/>
 <g fill="#EEC37E"><rect x="37" y="42" width="36" height="2.4"/><rect x="37.6" y="44.4" width="3.6" height="8.4"/><rect x="42.4" y="44.4" width="2.4" height="4"/><rect x="46" y="44.4" width="3.6" height="8.4"/><rect x="54.4" y="44.4" width="3.6" height="8.4"/><rect x="63.4" y="44.4" width="3.6" height="8.4"/></g>
 <polygon points="33,62 77,62 85,81 27,81" fill="#F7CE8A" opacity=".8"/>
 <polygon points="55,62 77,62 85,81 55,81" fill="#F0C078" opacity=".5"/>
 <rect x="48" y="73" width="14.5" height="3.8" fill="#8A5A18"/>
</svg>

</body></html>
